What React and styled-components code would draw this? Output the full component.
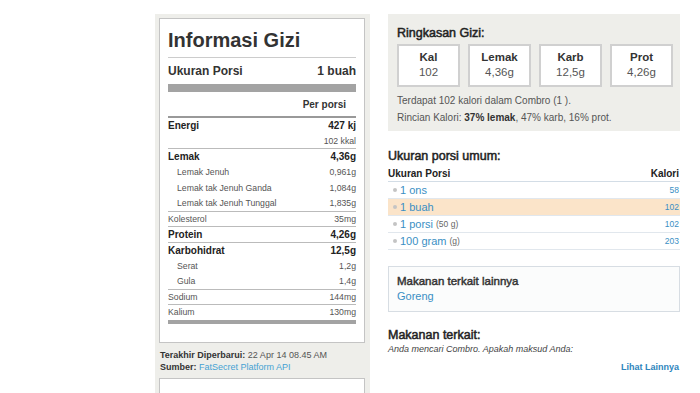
import React from "react";
import styled, { createGlobalStyle } from "styled-components";

const GlobalStyle = createGlobalStyle`
  html, body { margin: 0; padding: 0; background: #fff; }
  body { font-family: "Liberation Sans", Arial, sans-serif; color: #333; }
`;

const LINK = "#3a8fc4";

// Layout
const Page = styled.div`
  display: flex;
  align-items: flex-start;
  gap: 18px;
  padding: 14px 0 0 155px;
  height: 393px;
  box-sizing: border-box;
  overflow: hidden;
`;

const LeftCol = styled.div`
  width: 215px;
  min-height: 379px;
  box-sizing: border-box;
  background: #eeeeea;
  padding: 4px 5px 0 4px;
`;

const RightCol = styled.div`
  width: 292px;
  display: flex;
  flex-direction: column;
`;

// Nutrition label
const Label = styled.div`
  background: #fff;
  border: 1px solid #c4c4c4;
  padding: 9px 8px 18px 8px;
`;

const LabelTitle = styled.h1`
  margin: 0;
  font-size: 20px;
  line-height: 24px;
  font-weight: bold;
  color: #333;
  padding-bottom: 5px;
  border-bottom: 1px solid #ccc;
`;

const ServingRow = styled.div`
  display: flex;
  justify-content: space-between;
  align-items: center;
  height: 26px;
  font-size: 12px;
  font-weight: bold;
  color: #333;
  border-bottom: 8px solid #a3a3a3;
`;

const PerHead = styled.div`
  display: flex;
  justify-content: flex-end;
  align-items: center;
  height: 24px;
  padding-right: 10px;
  font-size: 10px;
  font-weight: bold;
  color: #333;
  border-bottom: 2px solid #999;
`;

const NutRow = styled.div`
  display: flex;
  justify-content: space-between;
  align-items: center;
  height: 14.6px;
  padding-left: ${(p) => (p.$indent ? "9px" : "0")};
  border-bottom: ${(p) =>
    p.$thick ? "4px solid #a3a3a3" : p.$line ? "1px solid #bbb" : "1px solid transparent"};
  font-size: ${(p) => (p.$bold ? "10px" : "8.7px")};
  font-weight: ${(p) => (p.$bold ? "bold" : "normal")};
  color: ${(p) => (p.$bold ? "#222" : "#555")};
`;

const Meta = styled.div`
  margin-top: 6px;
  font-size: 9px;
  line-height: 12px;
  color: #555;
  padding-left: 1px;
  b { color: #333; }
  a { color: #45a2d3; text-decoration: none; }
`;

const NextBox = styled.div`
  margin-top: 5px;
  height: 40px;
  background: #fff;
  border: 1px solid #c4c4c4;
  border-bottom: none;
`;

// Summary panel
const Summary = styled.div`
  background: #eeeeea;
  padding: 11px 7px 5px 9px;
`;

const Heading = styled.h3`
  margin: 0;
  font-size: 12.5px;
  line-height: 16px;
  font-weight: normal;
  color: #222;
  -webkit-text-stroke: 0.5px #222;
`;

const Boxes = styled.div`
  display: flex;
  gap: 8px;
  margin-top: 3px;
`;

const StatBox = styled.div`
  width: 63px;
  height: 43px;
  box-sizing: border-box;
  background: #fff;
  border: 2px solid #d0d0d0;
  padding-top: 4px;
  text-align: center;
`;

const StatLabel = styled.div`
  font-size: 11.5px;
  line-height: 15px;
  font-weight: bold;
  color: #333;
`;

const StatValue = styled.div`
  font-size: 11.5px;
  line-height: 15px;
  color: #555;
`;

const SummaryText = styled.div`
  font-size: 10px;
  line-height: 17px;
  color: #555;
  margin-top: ${(p) => (p.$first ? "5px" : "0")};
  b { color: #333; }
`;

// Serving table
const Section = styled.div`
  margin-top: ${(p) => p.$mt || "0"};
`;

const TableHead = styled.div`
  display: flex;
  justify-content: space-between;
  align-items: center;
  height: 16px;
  margin-top: 1px;
  padding-right: 1px;
  font-size: 10px;
  font-weight: bold;
  color: #222;
  border-bottom: 1px solid #d3dde6;
`;

const ServRow = styled.div`
  display: flex;
  justify-content: space-between;
  align-items: center;
  height: 16px;
  padding: 0 1px 0 5px;
  background: ${(p) => (p.$active ? "#fbe4c9" : "transparent")};
  border-bottom: 1px solid #e1e7ed;
`;

const ServName = styled.span`
  display: flex;
  align-items: center;
  font-size: 11px;
  color: ${LINK};
  &::before {
    content: "";
    width: 4px;
    height: 4px;
    border-radius: 50%;
    background: #c4c4c4;
    margin-right: 3px;
  }
  small { font-size: 8.5px; color: #666; margin-left: 3px; }
`;

const ServCal = styled.span`
  font-size: 8.5px;
  color: ${LINK};
`;

const RelatedBox = styled.div`
  margin-top: 16px;
  border: 1px solid #d7dde3;
  background: #fbfcfc;
  padding: 7px 8px;
`;

const RelatedTitle = styled.div`
  font-size: 11.5px;
  line-height: 15px;
  color: #333;
  -webkit-text-stroke: 0.45px #333;
`;

const Link = styled.a`
  display: block;
  font-size: 11px;
  line-height: 15px;
  color: ${LINK};
  text-decoration: none;
`;

const Hint = styled.div`
  font-size: 9px;
  line-height: 12px;
  font-style: italic;
  color: #444;
`;

const MoreLink = styled.a`
  display: block;
  margin-top: 6px;
  text-align: right;
  padding-right: 1px;
  font-size: 9px;
  line-height: 12px;
  font-weight: bold;
  color: #2e84bd;
  text-decoration: none;
`;

const nutrients = [
  { name: "Energi", value: "427 kj", bold: true },
  { name: "", value: "102 kkal", line: true },
  { name: "Lemak", value: "4,36g", bold: true },
  { name: "Lemak Jenuh", value: "0,961g", indent: true },
  { name: "Lemak tak Jenuh Ganda", value: "1,084g", indent: true },
  { name: "Lemak tak Jenuh Tunggal", value: "1,835g", indent: true, line: true },
  { name: "Kolesterol", value: "35mg", line: true },
  { name: "Protein", value: "4,26g", bold: true, line: true },
  { name: "Karbohidrat", value: "12,5g", bold: true },
  { name: "Serat", value: "1,2g", indent: true },
  { name: "Gula", value: "1,4g", indent: true, line: true },
  { name: "Sodium", value: "144mg", line: true },
  { name: "Kalium", value: "130mg", thick: true },
];

const stats = [
  { label: "Kal", value: "102" },
  { label: "Lemak", value: "4,36g" },
  { label: "Karb", value: "12,5g" },
  { label: "Prot", value: "4,26g" },
];

const servings = [
  { name: "1 ons", cal: "58" },
  { name: "1 buah", cal: "102", active: true },
  { name: "1 porsi", note: "(50 g)", cal: "102" },
  { name: "100 gram", note: "(g)", cal: "203" },
];

export default function App() {
  return (
    <>
      <GlobalStyle />
      <Page>
        <LeftCol>
          <Label>
            <LabelTitle>Informasi Gizi</LabelTitle>
            <ServingRow>
              <span>Ukuran Porsi</span>
              <span>1 buah</span>
            </ServingRow>
            <PerHead>Per porsi</PerHead>
            {nutrients.map((n, i) => (
              <NutRow key={i} $bold={n.bold} $indent={n.indent} $line={n.line} $thick={n.thick}>
                <span>{n.name}</span>
                <span>{n.value}</span>
              </NutRow>
            ))}
          </Label>
          <Meta>
            <b>Terakhir Diperbarui:</b> 22 Apr 14 08.45 AM
            <br />
            <b>Sumber:</b> <a href="#">FatSecret Platform API</a>
          </Meta>
          <NextBox />
        </LeftCol>

        <RightCol>
          <Summary>
            <Heading>Ringkasan Gizi:</Heading>
            <Boxes>
              {stats.map((s) => (
                <StatBox key={s.label}>
                  <StatLabel>{s.label}</StatLabel>
                  <StatValue>{s.value}</StatValue>
                </StatBox>
              ))}
            </Boxes>
            <SummaryText $first>Terdapat 102 kalori dalam Combro (1 ).</SummaryText>
            <SummaryText>
              Rincian Kalori: <b>37% lemak</b>, 47% karb, 16% prot.
            </SummaryText>
          </Summary>

          <Section $mt="17px">
            <Heading>Ukuran porsi umum:</Heading>
            <TableHead>
              <span>Ukuran Porsi</span>
              <span>Kalori</span>
            </TableHead>
            {servings.map((s) => (
              <ServRow key={s.name} $active={s.active}>
                <ServName>
                  {s.name}
                  {s.note && <small>{s.note}</small>}
                </ServName>
                <ServCal>{s.cal}</ServCal>
              </ServRow>
            ))}
          </Section>

          <RelatedBox>
            <RelatedTitle>Makanan terkait lainnya</RelatedTitle>
            <Link href="#">Goreng</Link>
          </RelatedBox>

          <Section $mt="15px">
            <Heading>Makanan terkait:</Heading>
            <Hint>Anda mencari Combro. Apakah maksud Anda:</Hint>
            <MoreLink href="#">Lihat Lainnya</MoreLink>
          </Section>
        </RightCol>
      </Page>
    </>
  );
}
